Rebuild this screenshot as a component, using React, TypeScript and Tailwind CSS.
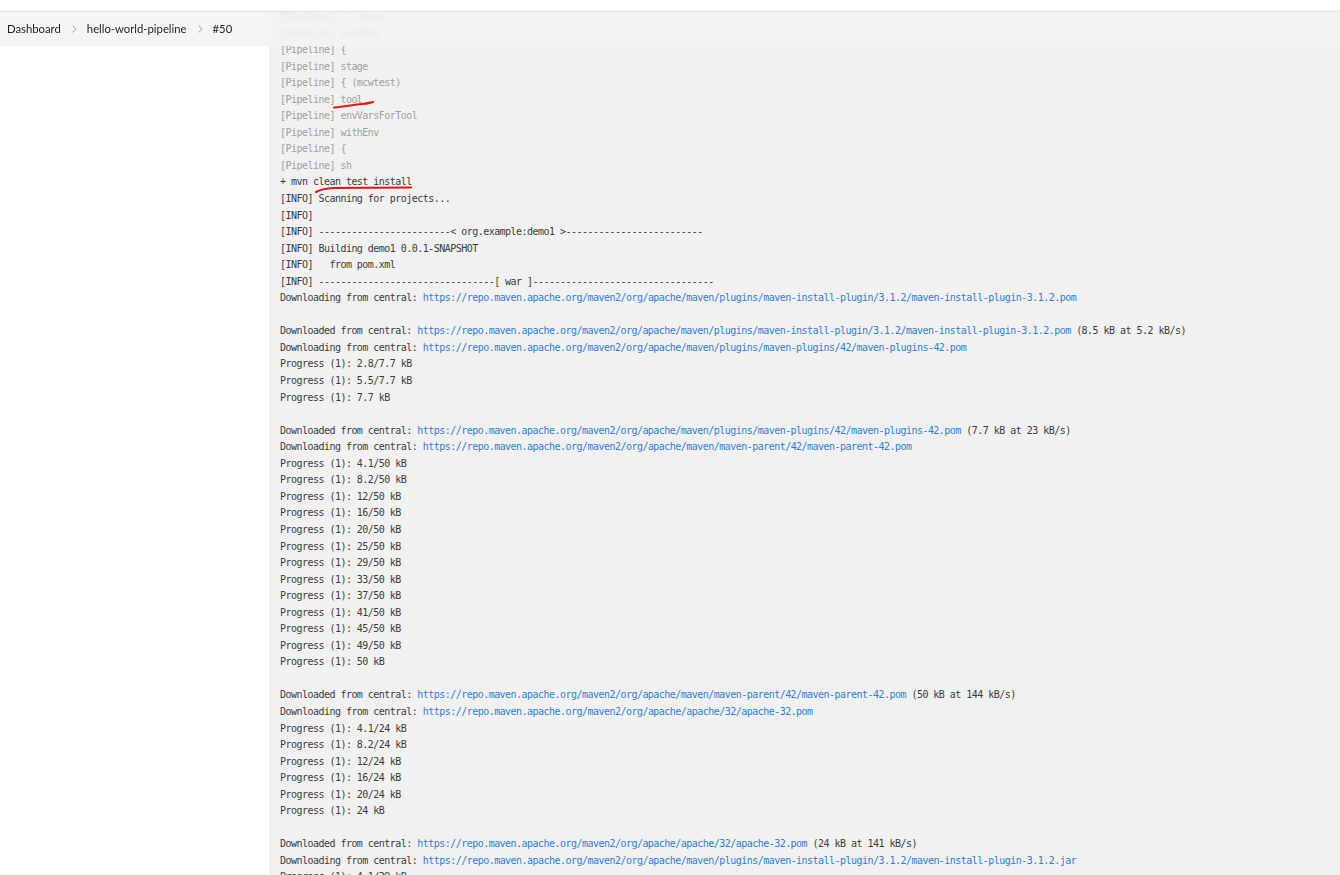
import React from "react";

type Seg = { t: string; c?: "g" | "n" | "l" };
type Line = Seg[];

const U = "https://repo.maven.apache.org/maven2/org/apache/";

const g = (t: string): Line => [{ t, c: "g" }];
const n = (t: string): Line => [{ t, c: "n" }];
const dl = (verb: string, url: string, tail?: string): Line => {
  const a: Line = [{ t: verb + " from central: ", c: "n" }, { t: url, c: "l" }];
  if (tail) a.push({ t: " " + tail, c: "n" });
  return a;
};
const blank: Line = [{ t: "\u00a0", c: "n" }];

const lines: Line[] = [
  g("[Pipeline] // stage"),
  g("[Pipeline] withEnv"),
  g("[Pipeline] {"),
  g("[Pipeline] stage"),
  g("[Pipeline] { (mcwtest)"),
  g("[Pipeline] tool"),
  g("[Pipeline] envVarsForTool"),
  g("[Pipeline] withEnv"),
  g("[Pipeline] {"),
  g("[Pipeline] sh"),
  n("+ mvn clean test install"),
  n("[INFO] Scanning for projects..."),
  n("[INFO]"),
  n("[INFO] ------------------------< org.example:demo1 >-------------------------"),
  n("[INFO] Building demo1 0.0.1-SNAPSHOT"),
  n("[INFO]   from pom.xml"),
  n("[INFO] --------------------------------[ war ]---------------------------------"),
  dl("Downloading", U + "maven/plugins/maven-install-plugin/3.1.2/maven-install-plugin-3.1.2.pom"),
  blank,
  dl("Downloaded", U + "maven/plugins/maven-install-plugin/3.1.2/maven-install-plugin-3.1.2.pom", "(8.5 kB at 5.2 kB/s)"),
  dl("Downloading", U + "maven/plugins/maven-plugins/42/maven-plugins-42.pom"),
  n("Progress (1): 2.8/7.7 kB"),
  n("Progress (1): 5.5/7.7 kB"),
  n("Progress (1): 7.7 kB"),
  blank,
  dl("Downloaded", U + "maven/plugins/maven-plugins/42/maven-plugins-42.pom", "(7.7 kB at 23 kB/s)"),
  dl("Downloading", U + "maven/maven-parent/42/maven-parent-42.pom"),
  ...["4.1/50", "8.2/50", "12/50", "16/50", "20/50", "25/50", "29/50", "33/50", "37/50", "41/50", "45/50", "49/50", "50"].map(
    (p) => n(`Progress (1): ${p} kB`)
  ),
  blank,
  dl("Downloaded", U + "maven/maven-parent/42/maven-parent-42.pom", "(50 kB at 144 kB/s)"),
  dl("Downloading", U + "apache/32/apache-32.pom"),
  ...["4.1/24", "8.2/24", "12/24", "16/24", "20/24", "24"].map((p) => n(`Progress (1): ${p} kB`)),
  blank,
  dl("Downloaded", U + "apache/32/apache-32.pom", "(24 kB at 141 kB/s)"),
  dl("Downloading", U + "maven/plugins/maven-install-plugin/3.1.2/maven-install-plugin-3.1.2.jar"),
  n("Progress (1): 4.1/39 kB"),
];

const colorCls = (c?: string) =>
  c === "g" ? "text-[#a0a0a0]" : c === "l" ? "text-[#2f7fd6]" : "text-[#3c3c3c]";

function Chevron() {
  return (
    <svg width="10" height="10" viewBox="0 0 10 10" className="mx-[8px]">
      <path d="M3.5 1.5 L7 5 L3.5 8.5" fill="none" stroke="#a8a8ad" strokeWidth="1" />
    </svg>
  );
}

export default function App() {
  return (
    <div className="relative h-[875px] w-[1340px] overflow-hidden bg-white">
      <div className="h-[11px] bg-white" />
      <div className="flex h-[864px] overflow-hidden">
        <div className="w-[269px] shrink-0 bg-white" />
        <div className="flex-1 bg-[#f1f1f1] pl-[11px]">
          <div
            className="-mt-[2px] whitespace-pre text-[10px] leading-[16.55px] tracking-[-0.53px]"
            style={{ fontFamily: '"DejaVu Sans Mono", "Liberation Mono", monospace' }}
          >
            {lines.map((ln, i) => (
              <div key={i}>
                {ln.map((s, j) => (
                  <span key={j} className={colorCls(s.c)}>
                    {s.t}
                  </span>
                ))}
              </div>
            ))}
          </div>
        </div>
      </div>

      {/* breadcrumb bar */}
      <div
        className="absolute left-0 right-0 top-[11px] flex h-[35px] items-center border-t border-[#e0e0e4] bg-[#f3f3f5]/85 pl-[7px] text-[11.3px] text-[#1e1e1e] backdrop-blur-[2px]"
        style={{ fontFamily: 'Lato, "Noto Sans", sans-serif' }}
      >
        <span>Dashboard</span>
        <Chevron />
        <span>hello-world-pipeline</span>
        <Chevron />
        <span>#50</span>
      </div>

      {/* red annotations */}
      <svg className="pointer-events-none absolute left-0 top-0" width="1340" height="875">
        <path
          d="M334 107.5 C 345 106.5, 355 104.5, 362 104 S 370 102.5, 373 102"
          fill="none"
          stroke="#e8141c"
          strokeWidth="2.2"
          strokeLinecap="round"
        />
        <path
          d="M316 192 C 320 189.5, 326 188.5, 334 188 L 411 187.5"
          fill="none"
          stroke="#e8141c"
          strokeWidth="2.2"
          strokeLinecap="round"
        />
      </svg>
    </div>
  );
}
